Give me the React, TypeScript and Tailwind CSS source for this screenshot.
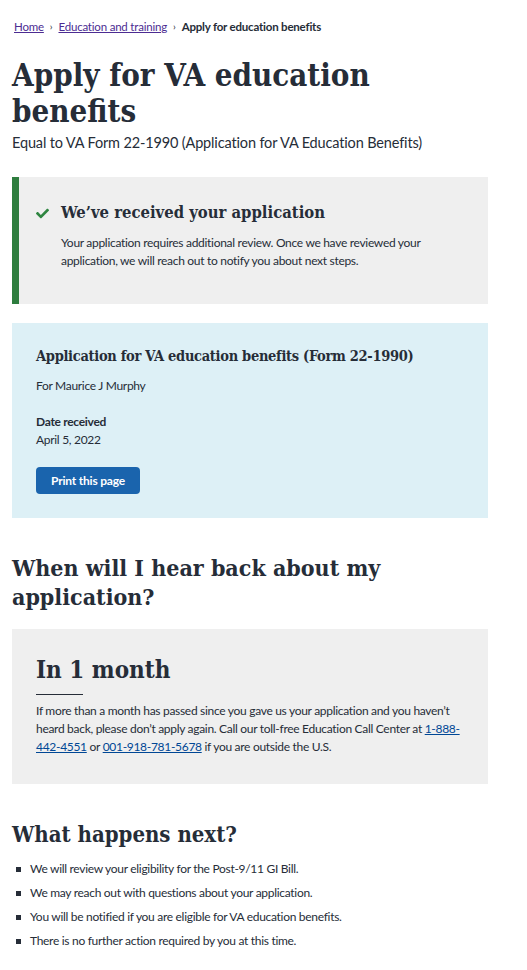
import { FaCheck } from 'react-icons/fa';

const serif = "font-['DejaVu_Serif_Condensed','DejaVu_Serif',serif]";
const body = 'text-[12px] leading-[18px] tracking-[-0.3px]';

export default function App() {
  const nextSteps = [
    'We will review your eligibility for the Post-9/11 GI Bill.',
    'We may reach out with questions about your application.',
    'You will be notified if you are eligible for VA education benefits.',
    'There is no further action required by you at this time.',
  ];

  return (
    <div className="min-h-screen bg-white font-['Lato',sans-serif] text-[#262d38]">
      <div className="w-[488px] pl-3">
        {/* Breadcrumb */}
        <nav className="pt-[18px] pl-[2px] text-[11.5px] tracking-[-0.2px] flex items-center gap-[6px]">
          <a href="#" className="text-[#4c2c92] underline">Home</a>
          <span className="text-[10px]">›</span>
          <a href="#" className="text-[#4c2c92] underline">Education and training</a>
          <span className="text-[10px]">›</span>
          <span className="font-bold">Apply for education benefits</span>
        </nav>

        {/* Title */}
        <h1 className={`${serif} mt-[22px] text-[31px] leading-[36px] font-bold`}>
          Apply for VA education benefits
        </h1>
        <p className="text-[14.5px] leading-[20px] tracking-[-0.15px] mt-[4px]">
          Equal to VA Form 22-1990 (Application for VA Education Benefits)
        </p>

        {/* Success alert */}
        <div className="mt-[24px] bg-[#efefef] border-l-[7px] border-[#2e7d3e] pt-[24px] pb-[34px] pl-[17px] pr-6">
          <div className="flex items-start gap-[12px]">
            <FaCheck className="text-[#2e8540] text-[13px] mt-[6px] shrink-0" />
            <div>
              <h3 className={`${serif} text-[16.5px] leading-[24px] font-bold`}>We’ve received your application</h3>
              <p className={`mt-[9px] ${body}`}>
                Your application requires additional review. Once we have reviewed your application, we will reach out to notify you about next steps.
              </p>
            </div>
          </div>
        </div>

        {/* Application summary */}
        <div className="mt-[19px] bg-[#ddf0f6] px-6 pt-[22px] pb-[24px]">
          <h3 className={`${serif} text-[14.5px] leading-[22px] tracking-[-0.3px] font-bold`}>
            Application for VA education benefits (Form 22-1990)
          </h3>
          <p className={`mt-[10px] ${body}`}>For Maurice J Murphy</p>
          <p className={`mt-[18px] ${body} font-bold`}>Date received</p>
          <p className={body}>April 5, 2022</p>
          <button className="mt-[18px] bg-[#1a64ad] text-white font-bold text-[12px] tracking-[-0.2px] rounded-[4px] h-[27px] px-[15px]">
            Print this page
          </button>
        </div>

        {/* When will I hear back */}
        <h2 className={`${serif} mt-[35px] text-[23px] leading-[29px] font-bold`}>
          When will I hear back about my application?
        </h2>
        <div className="mt-[18px] bg-[#efefef] px-6 pt-[26px] pb-[28px]">
          <h3 className={`${serif} text-[24px] leading-[30px] font-bold`}>In 1 month</h3>
          <div className="mt-[9px] w-[47px] h-px bg-[#262d38]" />
          <p className={`mt-[7px] ${body}`}>
            If more than a month has passed since you gave us your application and you haven’t heard back, please don’t apply again. Call our toll-free Education Call Center at{' '}
            <a href="#" className="text-[#004795] underline">1-888-442-4551</a> or{' '}
            <a href="#" className="text-[#004795] underline">001-918-781-5678</a> if you are outside the U.S.
          </p>
        </div>

        {/* What happens next */}
        <h2 className={`${serif} mt-[36px] text-[22px] leading-[28px] font-bold`}>What happens next?</h2>
        <ul className="mt-[12px] flex flex-col gap-[6px] pb-6">
          {nextSteps.map((s) => (
            <li key={s} className={`flex items-center gap-[9px] pl-[4px] ${body}`}>
              <span className="w-[5px] h-[5px] bg-[#262d38] shrink-0" />
              {s}
            </li>
          ))}
        </ul>
      </div>
    </div>
  );
}
